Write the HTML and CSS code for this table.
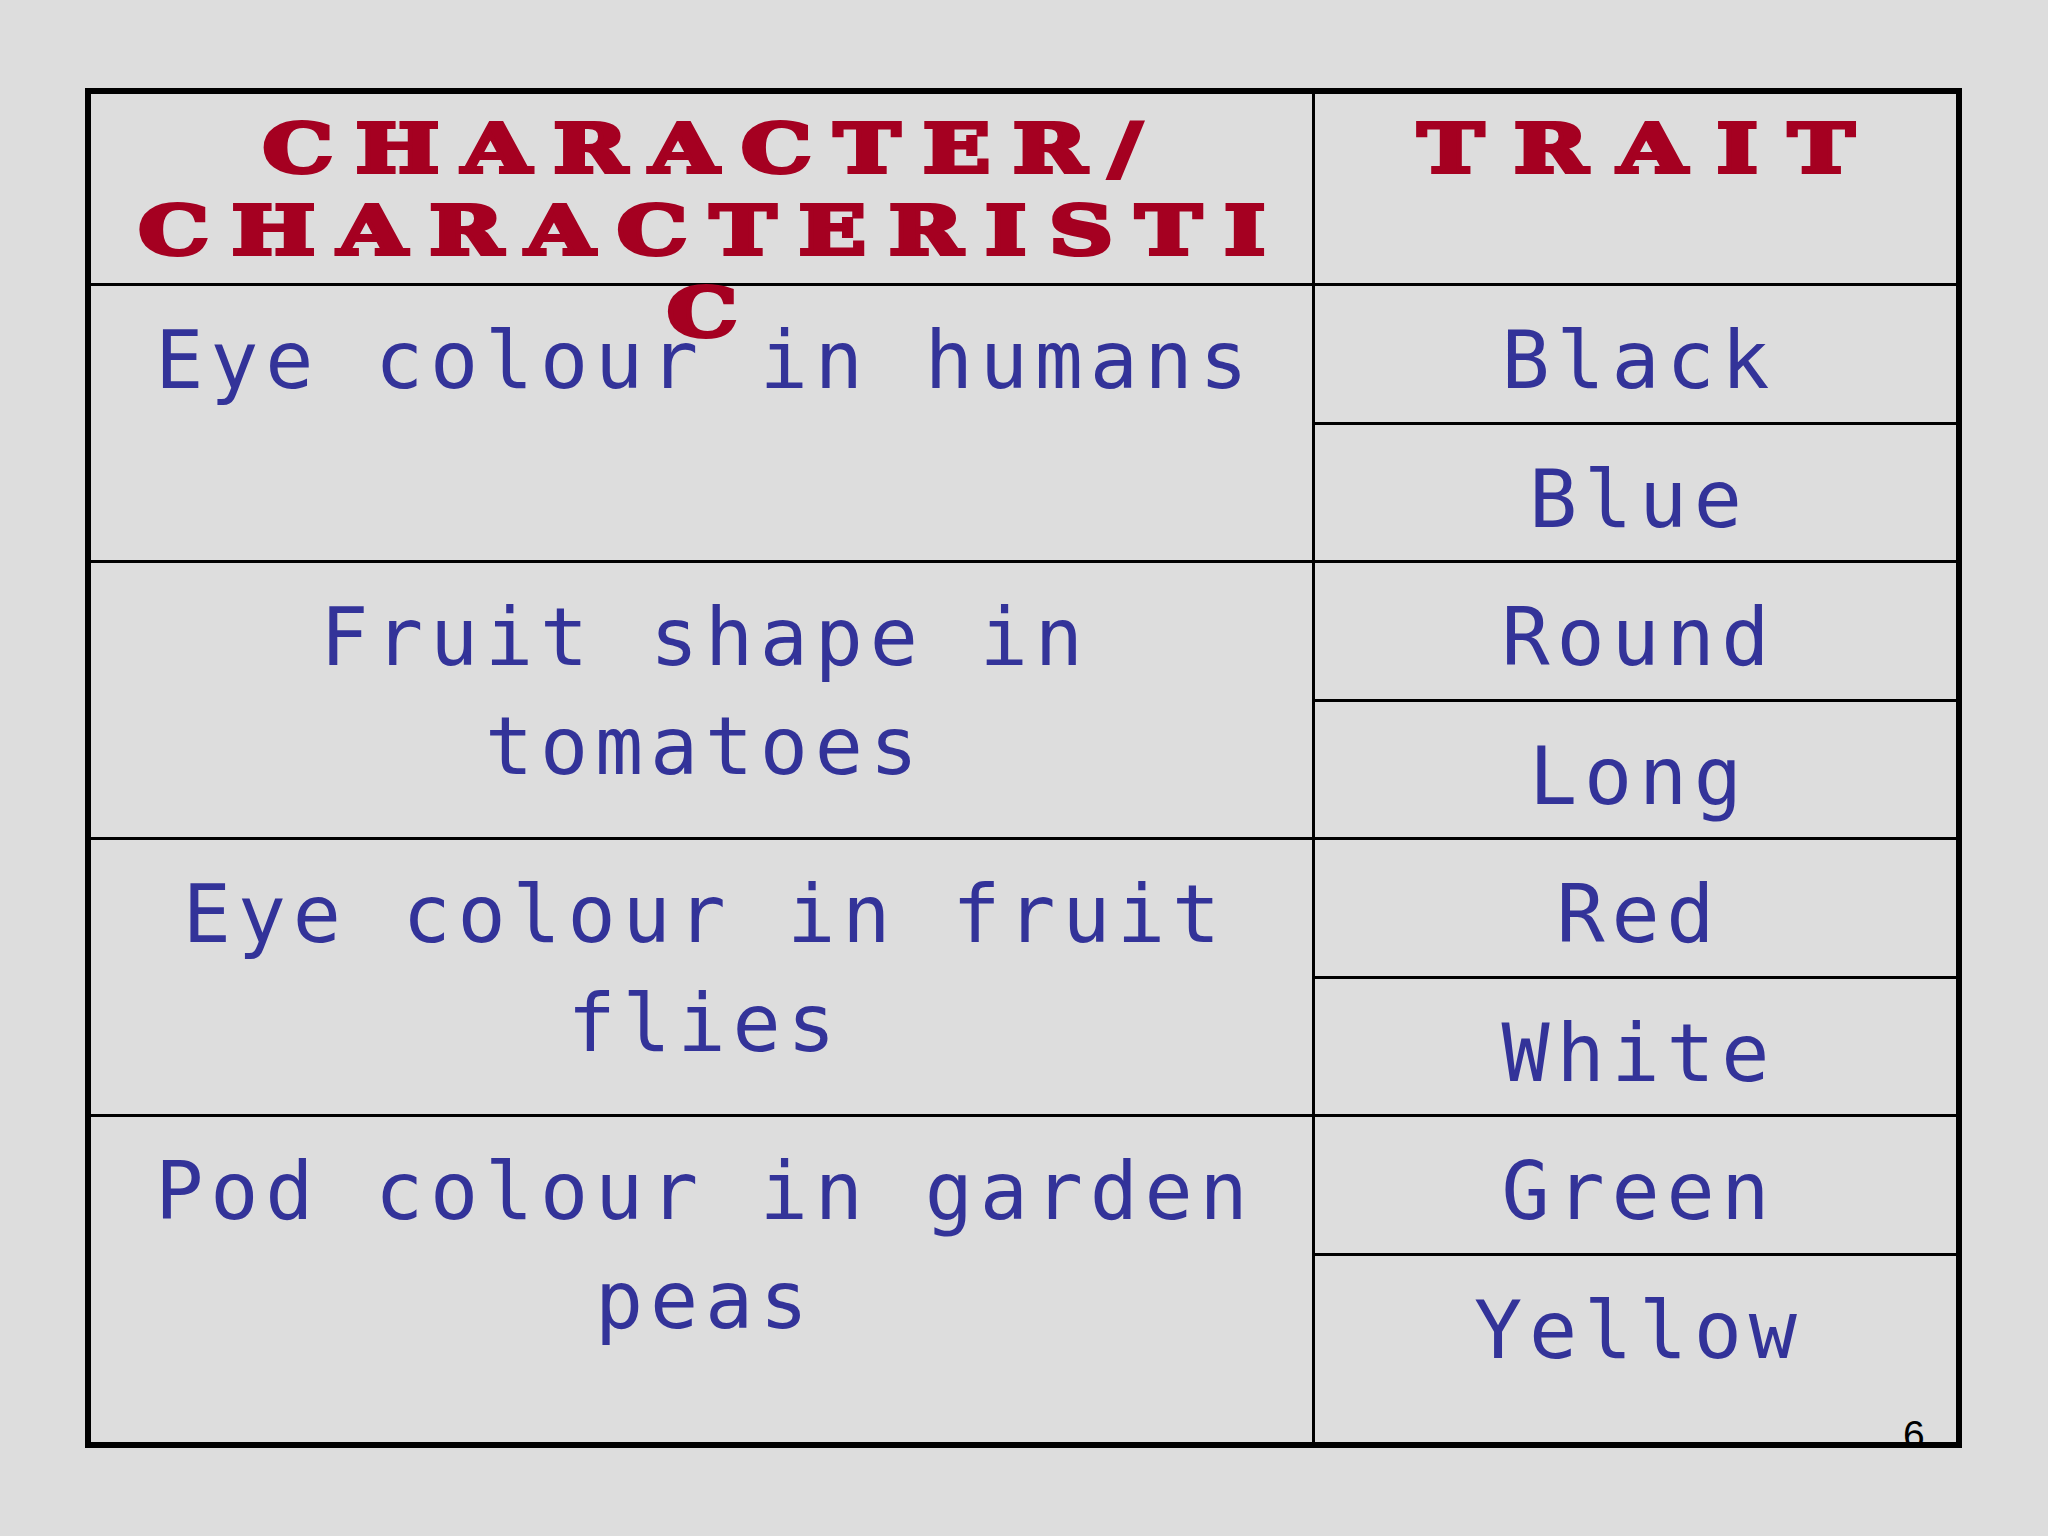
FILE: index.html
```html
<!DOCTYPE html>
<html lang="en">
<head>
<meta charset="utf-8">
<title>Character and Trait</title>
<link rel="stylesheet" href="styles.css">
</head>
<body>
<div class="slide">
  <div class="tbl">
    <div class="hd hd-left"><div class="hd-text hd-text-left">CHARACTER/ CHARACTERISTIC</div></div>
    <div class="hd hd-right"><div class="hd-text hd-text-right">TRAIT</div></div>

    <div class="char">Eye colour in humans</div>
    <div class="trait">Black</div>
    <div class="trait">Blue</div>

    <div class="char">Fruit shape in tomatoes</div>
    <div class="trait">Round</div>
    <div class="trait">Long</div>

    <div class="char">Eye colour in fruit flies</div>
    <div class="trait">Red</div>
    <div class="trait">White</div>

    <div class="char">Pod colour in garden peas</div>
    <div class="trait">Green</div>
    <div class="trait">Yellow</div>
  </div>
  <div class="pagenum">6</div>
</div>
</body>
</html>
```

FILE: styles.css
```css
html, body {
  margin: 0;
  padding: 0;
  background: #dddddd;
}

.slide {
  position: relative;
  width: 2048px;
  height: 1536px;
  background: #dddddd;
  padding-top: 88px;
  padding-left: 85px;
  box-sizing: border-box;
}

.tbl {
  box-sizing: border-box;
  width: 1877px;
  height: 1360px;
  border: 6px solid #000;
  display: grid;
  grid-template-columns: 1224px 641px;
  grid-template-rows: 189px 139px 138px 139px 138px 139px 138px 139px 189px;
}

.hd {
  font-family: "DejaVu Serif", "Liberation Serif", serif;
  font-weight: 700;
  font-size: 68px;
  line-height: 82px;
  color: #a50021;
  padding-top: 13px;
  box-sizing: border-box;
  z-index: 1;
}

.hd-text {
  text-align: center;
  -webkit-text-stroke: 4px #a50021;
  transform: scaleX(1.306);
  transform-origin: 50% 0;
  box-sizing: border-box;
  margin: 0 auto;
}

.hd-left {
  grid-column: 1;
  border-right: 3px solid #000;
}

.hd-text-left {
  width: 910px;
  letter-spacing: 17.2px;
  padding-left: 17.2px;
  overflow-wrap: anywhere;
}

.hd-right {
  grid-column: 2;
}

.hd-text-right {
  width: 460px;
  letter-spacing: 23px;
  padding-left: 23px;
}

.char,
.trait {
  font-family: "DejaVu Sans Mono", "Liberation Mono", monospace;
  font-size: 80px;
  line-height: 109.5px;
  letter-spacing: 6.8px;
  color: #333399;
  text-align: center;
  border-top: 3px solid #000;
  padding-top: 19.5px;
  padding-left: 6.8px;
  box-sizing: border-box;
}

.char {
  grid-column: 1;
  grid-row: span 2;
  border-right: 3px solid #000;
}

.trait {
  grid-column: 2;
}

.pagenum {
  position: absolute;
  left: 1903px;
  top: 1415px;
  font-family: "Liberation Sans", Arial, sans-serif;
  font-size: 39px;
  line-height: 39px;
  color: #000;
}
```
